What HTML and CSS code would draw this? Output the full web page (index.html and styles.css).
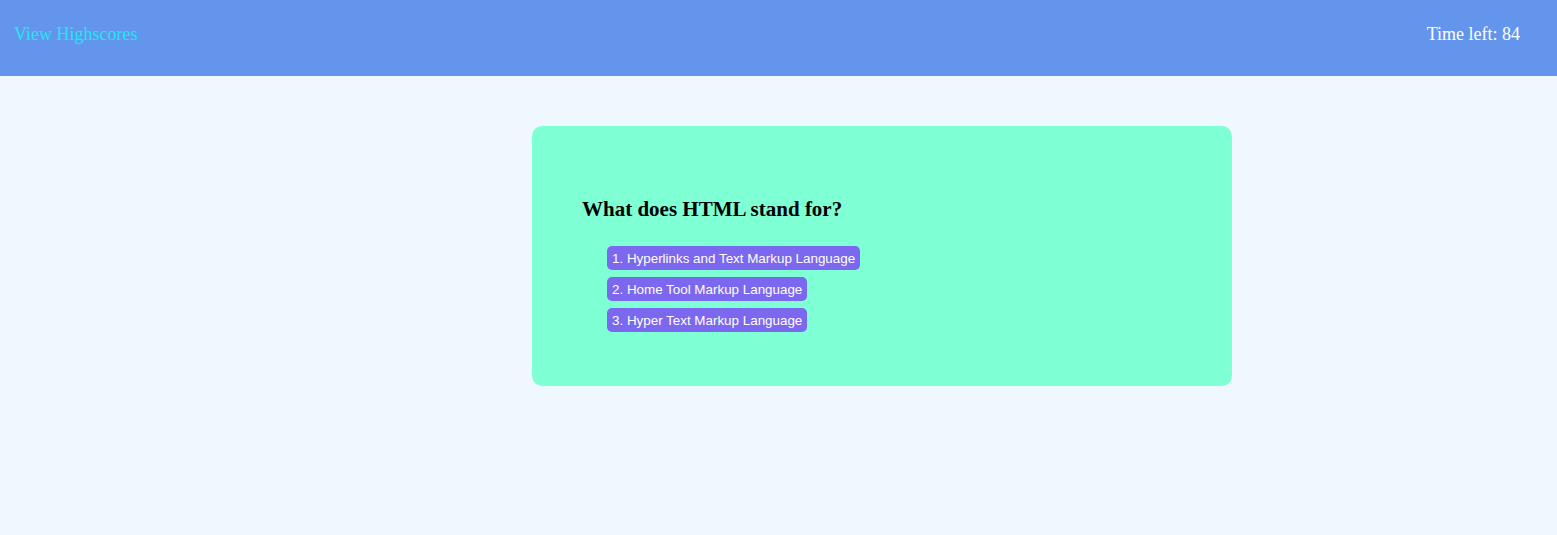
FILE: index.html
```html
<!DOCTYPE html>
<html>
<head>
<meta charset="utf-8">
<link rel="stylesheet" href="styles.css">
</head>
<body>
<header class="topbar">
  <a class="scores-link" href="#">View Highscores</a>
  <span class="timer">Time left: 84</span>
</header>
<main class="main">
  <section class="card">
    <h2 class="question">What does HTML stand for?</h2>
    <div class="choices">
      <button class="choice">1. Hyperlinks and Text Markup Language</button>
      <button class="choice">2. Home Tool Markup Language</button>
      <button class="choice">3. Hyper Text Markup Language</button>
    </div>
  </section>
</main>
</body>
</html>
```
FILE: styles.css
```css
html, body {
  margin: 0;
  padding: 0;
}
body {
  background: #F0F8FF;
  font-family: "Liberation Serif", "Times New Roman", serif;
  height: 535px;
}
.topbar {
  background: #6495ED;
  height: 76px;
  display: flex;
  align-items: center;
  justify-content: space-between;
  padding: 0 37px 0 14px;
  box-sizing: border-box;
  font-size: 18px;
}
.scores-link {
  color: #22E6F0;
  text-decoration: none;
  margin-top: -8px;
}
.timer {
  color: #ffffff;
  margin-top: -8px;
}
.main {
  padding-top: 50px;
  padding-left: 532px;
}
.card {
  width: 700px;
  height: 260px;
  box-sizing: border-box;
  background: #7FFFD4;
  border-radius: 10px;
  padding: 72px 50px 0 50px;
}
.question {
  margin: 0;
  font-size: 21px;
  font-weight: bold;
  line-height: 22px;
  color: #000;
}
.choices {
  margin-top: 26px;
  padding-left: 25px;
  display: flex;
  flex-direction: column;
  align-items: flex-start;
  gap: 7px;
}
.choice {
  background: #7B68EE;
  color: #fff;
  border: none;
  border-radius: 5px;
  height: 24px;
  padding: 0 5px;
  font-family: "Liberation Sans", Arial, sans-serif;
  font-size: 13.4px;
  font-weight: normal;
  cursor: pointer;
}
```
